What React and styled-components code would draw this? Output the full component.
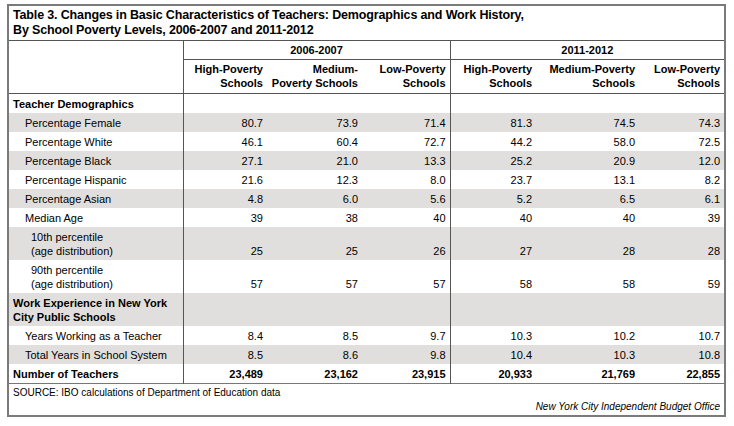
import React from "react";
import styled, { createGlobalStyle } from "styled-components";

const Global = createGlobalStyle`
  body {
    margin: 0;
    background: #ffffff;
    font-family: "Liberation Sans", Arial, sans-serif;
    color: #000000;
  }
`;

let Frame = styled.div`
  margin: 4px 0 0 7px;
  width: 715px;
  border: 2px solid #7a7a7a;
`;

let Title = styled.div`
  font-weight: bold;
  font-size: 12.5px;
  letter-spacing: -0.15px;
  line-height: 15px;
  padding: 2px 4px 2px 4px;
  border-bottom: 1px solid #555555;
`;

let Table = styled.table`
  width: 715px;
  border-collapse: collapse;
  table-layout: fixed;
  font-size: 11px;
`;

let Head = styled.th`
  font-weight: bold;
  text-align: ${p => (p.center ? "center" : "right")};
  vertical-align: bottom;
  line-height: 14px;
  padding: ${p => (p.center ? "2px 0 2px" : "2px 4px 3px 0")};
  border-bottom: 1px solid #555555;
  border-right: ${p => (p.divide ? "1px solid #555555" : "none")};
`;

let Row = styled.tr`
  background: ${p => (p.shade ? "#e1dfdd" : "#ffffff")};
  border-bottom: ${p => (p.last ? "1px solid #777777" : "none")};
`;

let Label = styled.td`
  font-weight: ${p => (p.bold ? "bold" : "normal")};
  padding: 2px 4px 2px ${p => p.indent}px;
  line-height: 14px;
  height: ${p => (p.tall ? 29 : 15)}px;
  vertical-align: bottom;
  border-right: 1px solid #555555;
`;

let Value = styled.td`
  font-weight: ${p => (p.bold ? "bold" : "normal")};
  text-align: right;
  padding: 2px 4px 2px 0;
  line-height: 14px;
  vertical-align: bottom;
  border-right: ${p => (p.divide ? "1px solid #555555" : "none")};
`;

let Footer = styled.div`
  display: flex;
  flex-direction: column;
  padding: 2px 4px 1px 4px;
  font-size: 10px;
  line-height: 14px;
`;

let Credit = styled.div`
  font-style: italic;
  text-align: right;
`;

const widths = [174, 84, 95, 88, 86, 103, 85];

const rows = [
  { label: "Teacher Demographics", section: true },
  { label: "Percentage Female", v: ["80.7", "73.9", "71.4", "81.3", "74.5", "74.3"] },
  { label: "Percentage White", v: ["46.1", "60.4", "72.7", "44.2", "58.0", "72.5"] },
  { label: "Percentage Black", v: ["27.1", "21.0", "13.3", "25.2", "20.9", "12.0"] },
  { label: "Percentage Hispanic", v: ["21.6", "12.3", "8.0", "23.7", "13.1", "8.2"] },
  { label: "Percentage Asian", v: ["4.8", "6.0", "5.6", "5.2", "6.5", "6.1"] },
  { label: "Median Age", v: ["39", "38", "40", "40", "40", "39"] },
  { label: ["10th percentile", "(age distribution)"], sub: true, v: ["25", "25", "26", "27", "28", "28"] },
  { label: ["90th percentile", "(age distribution)"], sub: true, v: ["57", "57", "57", "58", "58", "59"] },
  { label: ["Work Experience in New York", "City Public Schools"], section: true },
  { label: "Years Working as a Teacher", v: ["8.4", "8.5", "9.7", "10.3", "10.2", "10.7"] },
  { label: "Total Years in School System", v: ["8.5", "8.6", "9.8", "10.4", "10.3", "10.8"] },
  { label: "Number of Teachers", section: true, total: true, v: ["23,489", "23,162", "23,915", "20,933", "21,769", "22,855"] }
];

const heads = [
  ["High-Poverty", "Schools"],
  ["Medium-", "Poverty Schools"],
  ["Low-Poverty", "Schools"],
  ["High-Poverty", "Schools"],
  ["Medium-Poverty", "Schools"],
  ["Low-Poverty", "Schools"]
];

function lines(text) {
  if (!Array.isArray(text)) return text;
  return text.map((t, i) => (
    <React.Fragment key={i}>
      {i > 0 && <br />}
      {t}
    </React.Fragment>
  ));
}

export default function App() {
  return (
    <>
      <Global />
      <Frame>
        <Title>
          Table 3. Changes in Basic Characteristics of Teachers: Demographics and Work History,
          <br />
          By School Poverty Levels, 2006-2007 and 2011-2012
        </Title>
        <Table>
          <colgroup>
            {widths.map((w, i) => (
              <col key={i} style={{ width: w }} />
            ))}
          </colgroup>
          <thead>
            <tr>
              <Head rowSpan={2} divide />
              <Head colSpan={3} center divide>
                2006-2007
              </Head>
              <Head colSpan={3} center>
                2011-2012
              </Head>
            </tr>
            <tr>
              {heads.map((h, i) => (
                <Head key={i} divide={i === 2}>
                  {lines(h)}
                </Head>
              ))}
            </tr>
          </thead>
          <tbody>
            {rows.map((r, i) => {
              const tall = Array.isArray(r.label);
              return (
                <Row key={i} shade={i % 2 === 1} last={r.total}>
                  <Label bold={r.section} indent={r.section ? 4 : r.sub ? 22 : 16} tall={tall}>
                    {lines(r.label)}
                  </Label>
                  {(r.v || ["", "", "", "", "", ""]).map((v, j) => (
                    <Value key={j} bold={r.total} divide={j === 2}>
                      {v}
                    </Value>
                  ))}
                </Row>
              );
            })}
          </tbody>
        </Table>
        <Footer>
          <div>SOURCE: IBO calculations of Department of Education data</div>
          <Credit>New York City Independent Budget Office</Credit>
        </Footer>
      </Frame>
    </>
  );
}
